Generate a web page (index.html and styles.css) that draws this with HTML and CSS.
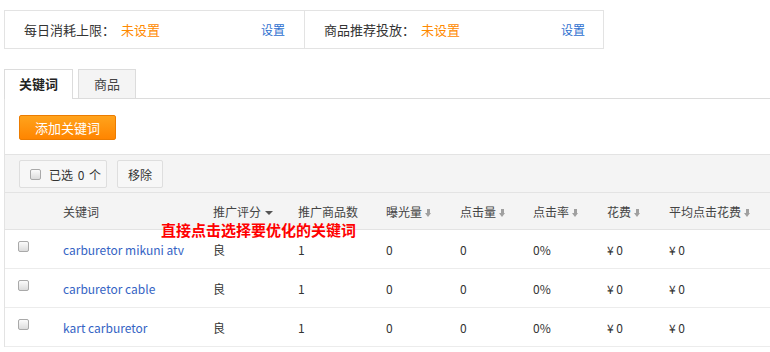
FILE: index.html
```html
<!DOCTYPE html>
<html lang="zh-CN">
<head>
  <meta charset="UTF-8">
  <meta name="viewport" content="width=device-width, initial-scale=1.0">
  <title>关键词推广</title>
  <link rel="stylesheet" href="styles.css">
</head>
<body>
  <div class="budget-bar">
    <div class="budget-item">
      <span>每日消耗上限：<em class="unset">未设置</em></span>
      <a href="#" class="link">设置</a>
    </div>
    <div class="budget-item">
      <span>商品推荐投放：<em class="unset">未设置</em></span>
      <a href="#" class="link">设置</a>
    </div>
  </div>

  <ul class="tabs">
    <li class="tab active">关键词</li>
    <li class="tab">商品</li>
  </ul>

  <div class="panel">
    <div class="actions">
      <button type="button" class="btn-add">添加关键词</button>
    </div>

    <div class="toolbar">
      <label class="btn-tool"><input type="checkbox" class="check"><span class="selected">已选 0 个</span></label>
      <button type="button" class="btn-tool">移除</button>
    </div>

    <div class="table-wrap">
      <table class="kw-table">
        <colgroup>
          <col style="width:58px"><col style="width:150px"><col style="width:85px">
          <col style="width:88px"><col style="width:74px"><col style="width:73px">
          <col style="width:74px"><col style="width:62px"><col>
        </colgroup>
        <thead>
          <tr>
            <th></th>
            <th>关键词</th>
            <th>推广评分 <span class="caret"></span></th>
            <th>推广商品数</th>
            <th>曝光量<span class="sort"></span></th>
            <th>点击量<span class="sort"></span></th>
            <th>点击率<span class="sort"></span></th>
            <th>花费<span class="sort"></span></th>
            <th>平均点击花费<span class="sort"></span></th>
          </tr>
        </thead>
        <tbody>
          <tr>
            <td><input type="checkbox" class="check"></td>
            <td><a href="#" class="kw">carburetor mikuni atv</a></td>
            <td>良</td><td>1</td><td>0</td><td>0</td><td>0%</td><td>¥ 0</td><td>¥ 0</td>
          </tr>
          <tr>
            <td><input type="checkbox" class="check"></td>
            <td><a href="#" class="kw">carburetor cable</a></td>
            <td>良</td><td>1</td><td>0</td><td>0</td><td>0%</td><td>¥ 0</td><td>¥ 0</td>
          </tr>
          <tr>
            <td><input type="checkbox" class="check"></td>
            <td><a href="#" class="kw">kart carburetor</a></td>
            <td>良</td><td>1</td><td>0</td><td>0</td><td>0%</td><td>¥ 0</td><td>¥ 0</td>
          </tr>
        </tbody>
      </table>
      <p class="note">直接点击选择要优化的关键词</p>
    </div>
  </div>
</body>
</html>
```

FILE: styles.css
```css
body {
  margin: 0;
  padding: 10px 0 0 4px;
  font-family: "Noto Sans CJK SC", "Liberation Sans", sans-serif;
  font-size: 12px;
  color: #333;
  background: #fff;
}
a {
  text-decoration: none;
}
em {
  font-style: normal;
}

.budget-bar {
  display: flex;
  width: 598px;
  height: 37px;
  border: 1px solid #e3e3e3;
}
.budget-item {
  flex: 1;
  display: flex;
  align-items: center;
  justify-content: space-between;
  padding: 0 19px 0 19px;
  font-size: 13px;
}
.budget-item + .budget-item {
  border-left: 1px solid #e3e3e3;
  padding-right: 18px;
}
.unset {
  color: #ff8a00;
  margin-left: 6px;
}
.link {
  color: #2d6fcf;
  font-size: 12px;
}

.tabs {
  display: flex;
  gap: 5px;
  list-style: none;
  margin: 20px 0 0;
  padding: 0;
  border-bottom: 1px solid #dcdcdc;
  height: 29px;
}
.tab {
  height: 28px;
  line-height: 28px;
  padding: 0 15px;
  font-size: 13px;
  border: 1px solid #dcdcdc;
  border-bottom: none;
  background: #f4f4f4;
  color: #444;
}
.tab.active {
  background: #fff;
  height: 29px;
  padding: 0 14px;
  color: #222;
  font-weight: bold;
}

.panel {
  border-left: 1px solid #e3e3e3;
}
.actions {
  padding: 16px 0 14px 14px;
}
.btn-add {
  width: 97px;
  height: 25px;
  font-family: inherit;
  font-size: 13px;
  color: #fff;
  border: 1px solid #ec7c00;
  border-radius: 2px;
  background: linear-gradient(#ffa31c, #ff8500);
  padding: 0;
}

.toolbar {
  display: flex;
  gap: 10px;
  height: 39px;
  padding: 5px 0 0 14px;
  box-sizing: border-box;
  background: #f4f4f4;
  border-top: 1px solid #e3e3e3;
  border-bottom: 1px solid #e3e3e3;
}
.btn-tool {
  display: flex;
  align-items: center;
  gap: 8px;
  height: 28px;
  box-sizing: border-box;
  padding: 0 10px;
  border: 1px solid #dedede;
  border-radius: 2px;
  background: #f7f7f7;
  font-family: inherit;
  font-size: 12px;
  color: #333;
  white-space: nowrap;
}
label.btn-tool {
  width: 88px;
  padding-left: 10px;
}
.selected {
  word-spacing: 2px;
}

.check {
  appearance: none;
  flex: none;
  width: 11px;
  height: 11px;
  margin: 0;
  border: 1px solid #a9a9a9;
  border-radius: 2px;
  background: linear-gradient(#fbfbfb, #dcdcdc);
}

.table-wrap {
  position: relative;
}
.kw-table {
  width: 100%;
  table-layout: fixed;
  border-collapse: collapse;
}
.kw-table th {
  height: 36px;
  padding: 0;
  text-align: left;
  font-weight: normal;
  color: #444;
  background: #f4f4f4;
  border-bottom: 1px solid #e3e3e3;
  white-space: nowrap;
}
.kw-table td {
  height: 38px;
  padding: 0;
  border-bottom: 1px solid #ececec;
  white-space: nowrap;
}
.kw-table td:first-child {
  padding-left: 13px;
}
.kw-table td:first-child .check {
  position: relative;
  top: -3px;
  display: block;
}
.kw {
  color: #3563c4;
}
.caret {
  display: inline-block;
  vertical-align: middle;
  border-left: 4px solid transparent;
  border-right: 4px solid transparent;
  border-top: 4px solid #555;
  margin-left: 1px;
}
.sort {
  display: inline-block;
  position: relative;
  width: 7px;
  height: 8px;
  margin-left: 3px;
  vertical-align: middle;
}
.sort::before {
  content: "";
  position: absolute;
  left: 2px;
  top: 0;
  width: 3px;
  height: 4px;
  background: #a0a0a0;
}
.sort::after {
  content: "";
  position: absolute;
  left: 0;
  top: 4px;
  border-left: 3.5px solid transparent;
  border-right: 3.5px solid transparent;
  border-top: 4px solid #a0a0a0;
}

.note {
  position: absolute;
  left: 156px;
  top: 26px;
  margin: 0;
  color: #f00;
  font-size: 15px;
  font-weight: bold;
}
```
